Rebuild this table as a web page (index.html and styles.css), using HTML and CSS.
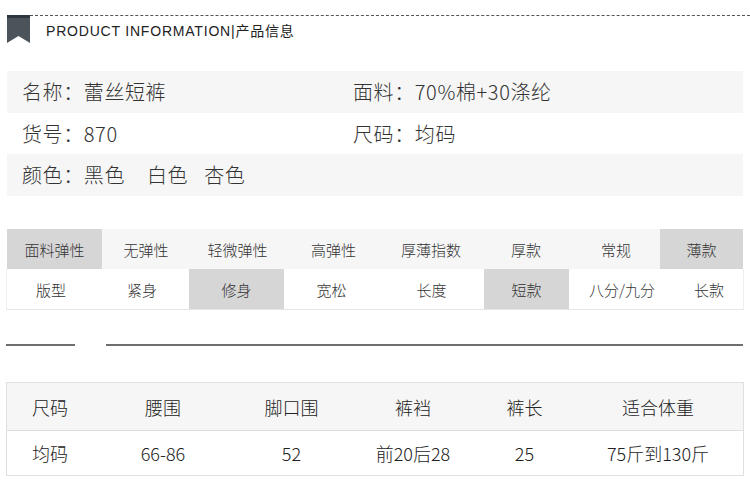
FILE: index.html
```html
<!DOCTYPE html>
<html lang="zh">
<head>
<meta charset="utf-8">
<title>Product Information</title>
<link rel="stylesheet" href="styles.css">
</head>
<body>
<div class="page">
  <div class="header">
    <svg class="badge" width="23" height="28" viewBox="0 0 23 28">
      <polygon points="0,0 23,0 23,28 11.5,21 0,28" fill="#4b545b"/>
      <rect x="0" y="0" width="23" height="3" fill="#2e373d"/>
    </svg>
    <div class="header-title">PRODUCT INFORMATION|产品信息</div>
  </div>

  <div class="info">
    <div class="info-row shade">
      <div class="info-cell">名称：蕾丝短裤</div>
      <div class="info-cell">面料：70%棉+30涤纶</div>
    </div>
    <div class="info-row mid">
      <div class="info-cell">货号：870</div>
      <div class="info-cell">尺码：均码</div>
    </div>
    <div class="info-row shade">
      <div class="info-cell">颜色：<span class="c1">黑色</span><span class="c2">白色</span><span>杏色</span></div>
      <div class="info-cell"></div>
    </div>
  </div>

  <div class="spec">
    <div class="spec-row r1">
      <div class="sel">面料弹性</div>
      <div>无弹性</div>
      <div>轻微弹性</div>
      <div>高弹性</div>
      <div>厚薄指数</div>
      <div>厚款</div>
      <div>常规</div>
      <div class="sel">薄款</div>
    </div>
    <div class="spec-row r2">
      <div>版型</div>
      <div>紧身</div>
      <div class="sel">修身</div>
      <div>宽松</div>
      <div>长度</div>
      <div class="sel">短款</div>
      <div>八分/九分</div>
      <div>长款</div>
    </div>
  </div>

  <div class="divider">
    <span class="line short"></span>
    <span class="line long"></span>
  </div>

  <div class="size">
    <div class="size-row head">
      <div>尺码</div>
      <div>腰围</div>
      <div>脚口围</div>
      <div>裤裆</div>
      <div>裤长</div>
      <div>适合体重</div>
    </div>
    <div class="size-row body">
      <div>均码</div>
      <div>66-86</div>
      <div>52</div>
      <div>前20后28</div>
      <div>25</div>
      <div>75斤到130斤</div>
    </div>
  </div>
</div>
</body>
</html>
```

FILE: styles.css
```css
html, body {
  margin: 0;
  padding: 0;
  background: #ffffff;
}

body {
  width: 750px;
  height: 504px;
  overflow: hidden;
  font-family: "Noto Sans CJK SC", "Liberation Sans", sans-serif;
  font-weight: 300;
  color: #333333;
}

.page {
  padding: 15px 7px 0 7px;
}

/* header */
.header {
  display: flex;
  height: 28px;
}

.badge {
  display: block;
  flex: none;
}

.header-title {
  flex: 1;
  margin-right: -7px;
  border-top: 1px dashed #555555;
  padding: 5px 0 0 16px;
  font-family: "Liberation Sans", "Noto Sans CJK SC", sans-serif;
  font-weight: 400;
  font-size: 14px;
  line-height: 20px;
  letter-spacing: 0.8px;
  color: #222222;
}

/* info */
.info {
  margin-top: 28px;
}

.info-row {
  display: grid;
  grid-template-columns: 331px 1fr;
  align-items: center;
  height: 42px;
  padding-left: 15px;
  font-size: 20px;
  line-height: 26px;
  color: #333333;
}

.info-row.mid {
  height: 41px;
}

.info-row.shade {
  background: #f6f6f6;
}

.info-cell {
  letter-spacing: 0.6px;
  white-space: nowrap;
}

.c1 {
  margin-right: 22px;
}

.c2 {
  margin-right: 16px;
}

/* spec */
.spec {
  margin-top: 33px;
}

.spec-row {
  display: grid;
  font-size: 15px;
  color: #333333;
}

.spec-row > div {
  display: flex;
  align-items: center;
  justify-content: center;
}

.spec-row.r1 {
  grid-template-columns: 95px 88px 95px 97px 98px 92px 88px 83px;
  height: 40px;
  background: #f6f6f6;
}

.spec-row.r2 {
  grid-template-columns: 88px 94px 95px 95px 105px 85px 106px 68px;
  height: 40px;
  background: #ffffff;
  border-left: 1px solid #eeeeee;
  border-right: 1px solid #eeeeee;
  border-bottom: 1px solid #e6e6e6;
  margin-left: -1px;
  margin-right: -1px;
}

.spec-row .sel {
  background: #d6d6d6;
}

/* divider */
.divider {
  display: flex;
  margin-top: 34px;
  margin-left: -1px;
  height: 2px;
}

.line {
  display: block;
  height: 2px;
  background: #6e6e6e;
}

.line.short {
  width: 69px;
}

.line.long {
  margin-left: 31px;
  flex: 1;
}

/* size table */
.size {
  margin-top: 36px;
  border: 1px solid #e0e0e0;
  margin-left: -1px;
  margin-right: -1px;
}

.size-row {
  display: grid;
  grid-template-columns: 86px 140px 117px 126px 97px 1fr;
  font-size: 18px;
  color: #222222;
}

.size-row > div {
  display: flex;
  align-items: center;
  justify-content: center;
}

.size-row.head {
  height: 47px;
  background: #f6f6f6;
  border-bottom: 1px solid #dddddd;
}

.size-row.body {
  height: 44px;
}
```
